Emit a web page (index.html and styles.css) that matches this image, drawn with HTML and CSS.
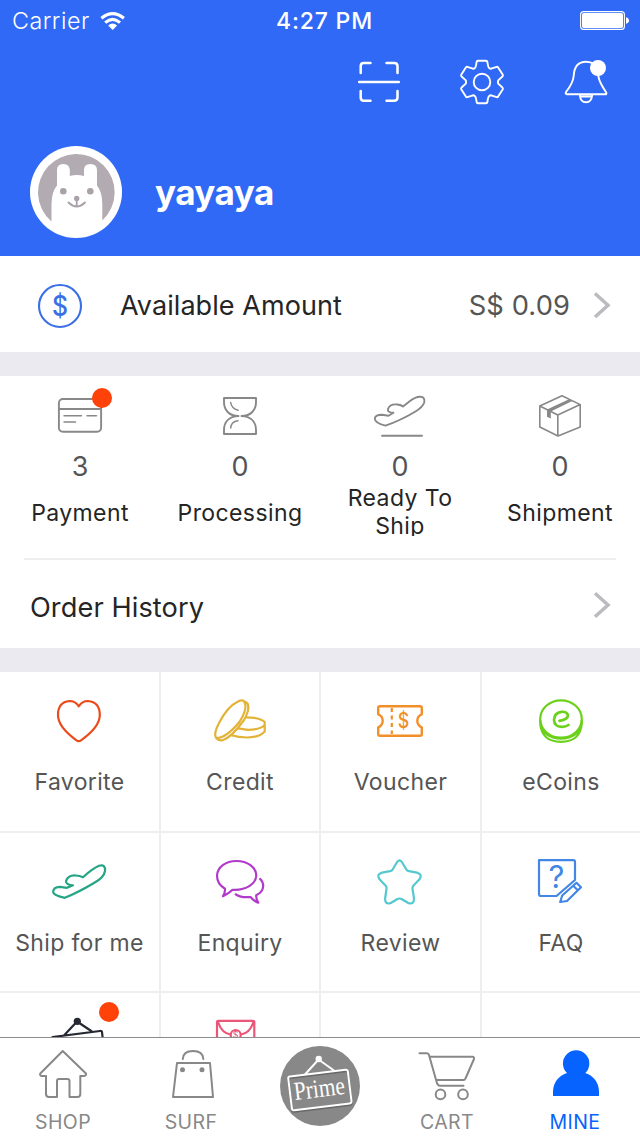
FILE: index.html
```
<!DOCTYPE html>
<html lang="en">
<head>
<meta charset="utf-8">
<title>Mine</title>
<link rel="stylesheet" href="styles.css">
</head>
<body>
<div class="screen">
  <header class="header">
    <div class="status">
      <div class="status-left">
        <span class="carrier">Carrier</span>
        <svg class="wifi" viewBox="100 10 26 20" fill="none" stroke="#fff" stroke-width="3.1"><path d="M101.4 17.3Q112.6 8 123.9 17.3M105.2 21.7Q112.6 15.2 120 21.7"/><path d="M108.2 24.4Q112.6 20.8 117.1 24.4L112.7 29Z" fill="#fff" stroke="none"/></svg>
      </div>
      <span class="time">4:27 PM</span>
      <svg class="battery" viewBox="580 10 50 21"><rect x="580.6" y="11.6" width="43.8" height="17.8" rx="3" fill="none" stroke="#fff" stroke-width="1.1"/><rect x="582" y="13" width="41" height="15" rx="1.8" fill="#fff"/><path d="M626 17.2Q629 18 629 20.5Q629 23 626 23.8Z" fill="#fff"/></svg>
    </div>
    <nav class="tools">
      <svg class="tool" viewBox="354 58 48 48"><path d="M360.7 73V66Q360.7 63 363.7 63H370.5M386.5 63H394Q397.5 63 397.5 66V73M360.7 91V97.5Q360.7 100.7 363.7 100.7H370.5M386.5 100.7H394Q397.5 100.7 397.5 97.5V91M359.2 82H398.8" stroke-width="2.5"/></svg>
      <svg class="tool" viewBox="458 58 48 48"><path transform="translate(482 82)" d="M-7-14.2Q-6-15-5.4-20Q-5.2-21.2-4-21.2H4Q5.2-21.2 5.4-20Q6-15 7-14.2Q8-13.2 9.06-13.3L14.7-15.2Q15.7-15.5 16.3-14.3L20.8-7.2Q21.2-6 20.4-5.5L16.2-1.6Q15.6 0 16.2 1.6L20.4 5.5Q21.2 6 20.8 7.2L16.3 14.3Q15.7 15.5 14.7 15.2L9.06 13.3Q8 13.2 7 14.2Q6 15 5.4 20Q5.2 21.2 4 21.2H-4Q-5.2 21.2-5.4 20Q-6 15-7 14.2Q-8 13.2-9.06 13.3L-14.7 15.2Q-15.7 15.5-16.3 14.3L-20.8 7.2Q-21.2 6-20.4 5.5L-16.2 1.6Q-15.6 0-16.2-1.6L-20.4-5.5Q-21.2-6-20.8-7.2L-16.3-14.3Q-15.7-15.5-14.7-15.2L-9.06-13.3Q-8-13.2-7-14.2Z"/><circle cx="482" cy="82" r="8.3"/></svg>
      <svg class="tool" viewBox="562 58 48 48"><path d="M567 94.3H605Q607 94.3 606.2 92.5Q599.5 82.5 598.5 77L597.8 71.5Q596 61.8 586 61.8Q574.8 61.8 573.8 75Q573.5 82.5 566 92Q565 94.3 567 94.3ZM579.8 95Q580.5 102.3 586 102.3Q591.5 102.3 592.2 95M580 96.5H592"/><circle cx="598" cy="68" r="8" fill="#fff" stroke="none"/></svg>
    </nav>
    <div class="profile">
      <svg class="avatar" viewBox="30 146 92 92"><circle cx="76" cy="192" r="46" fill="#fff"/><path d="M51.5 221.5A38.3 38.3 0 1 1 102.3 220.5V204Q102.3 192 97 185.5V170Q97 164 90.3 164Q84 164 84 170V176Q77 174 69.8 176V170Q69.5 164 63.3 164Q57 164 57 170V185.5Q51.5 192 51.5 204Z" fill="#b3abb2"/><g fill="#aaa2a9"><circle cx="63.3" cy="191.3" r="3.3"/><circle cx="90.3" cy="191.3" r="3.3"/><circle cx="76.7" cy="198.4" r="2.7"/></g><path d="M68.5 202.5Q76.7 210.5 85 202.5M76.7 198V206" fill="none" stroke="#aaa2a9" stroke-width="1.9" stroke-linecap="round"/></svg>
      <h1 class="name">yayaya</h1>
    </div>
  </header>

  <section class="amount">
    <svg class="coin" viewBox="37 283 46 46"><circle cx="60" cy="306" r="21" fill="none" stroke="#3b6fe6" stroke-width="2.1"/><text x="60" y="315.8" class="glyph-dollar" textLength="16" lengthAdjust="spacingAndGlyphs">$</text></svg>
    <span class="amount-label">Available Amount</span>
    <span class="amount-value">S$ 0.09</span>
    <svg class="chevron" viewBox="593 292 18 28"><path d="M595 293.5L608 305.3L595 317"/></svg>
  </section>

  <section class="orders">
    <div class="order">
      <svg class="order-icon" viewBox="0 376 160 72"><rect x="58.9" y="399" width="42.2" height="32.8" rx="4"/><path d="M59 409H101" stroke-width="2.2"/><path d="M64 415.7H81.5M87 415.7H96.5M64 422H75.5" stroke-width="1.4"/><circle cx="102" cy="398" r="10" fill="#fe4209" stroke="none"/></svg>
      <span class="count">3</span><span class="order-label"><span class="order-line">Payment</span></span>
    </div>
    <div class="order">
      <svg class="order-icon" viewBox="160 376 160 72"><path d="M224 398H256V402C256 410 251 416 241.5 416C251 416.5 256 422 256 430V434H224V430C224 422 229 416.5 238.5 416C229 416 224 410 224 402Z"/><path d="M230.7 402.5Q231.5 408.5 238 410.3M230.7 428Q231 421.5 238 420.7" stroke-width="1.5"/></svg>
      <span class="count">0</span><span class="order-label"><span class="order-line">Processing</span></span>
    </div>
    <div class="order">
      <svg class="order-icon" viewBox="320 376 160 72"><path d="M385.5 425.6Q374.8 423 374.8 418.5Q375 415 382 414.8L388.5 415.8L393.5 412.8Q387 412.5 388 409Q389.8 403.7 397.5 404.5Q401.5 405 403 406.5L410 401Q416.5 396 421 396.8Q425.2 397.4 424.2 402.5Q422.8 407 415.5 411.5Q400.5 420.5 385.5 425.6Z"/><path d="M382 435.8H422"/></svg>
      <span class="count">0</span><span class="order-label"><span>Ready To Ship</span></span>
    </div>
    <div class="order">
      <svg class="order-icon" viewBox="480 376 160 72"><path d="M539.8 406L562 395.8L580.2 404.6V427L558 436L539.8 427ZM539.8 406L557.8 415L580.2 404.6M557.8 415V436" stroke-width="1.6"/><path d="M547 409.5L569 399.2L572.3 400.9L550.8 411.6V418.5L547 416.8Z" fill="#888" stroke="none"/></svg>
      <span class="count">0</span><span class="order-label"><span class="order-line">Shipment</span></span>
    </div>
  </section>
  <section class="history">
    <span class="history-label">Order History</span>
    <svg class="chevron" viewBox="593 591 18 28"><path d="M595 593.3L608 605L595 616.7"/></svg>
  </section>

  <main class="grid">
    <div class="cell">
      <svg class="cell-icon" viewBox="0 672 159 88" stroke="#eb4b1a"><path d="M78.8 706.3Q75.5 701 69.5 701Q58 702 58 715Q58 727 76.5 740.3Q78.8 742 81 740.3Q99.8 727 99.8 715Q99.8 702 88 701Q82 701 78.8 706.3Z"/></svg>
      <span class="cell-label">Favorite</span>
    </div>
    <div class="cell">
      <svg class="cell-icon" viewBox="161 672 158 88" stroke="#e3b338"><path d="M216.3 738.2Q213 734.5 219 723Q227.5 706.5 238 701.5Q242 699.5 244 701.3Q248.5 708 239 722.5Q226 738 216.3 738.2ZM216.3 738.2Q219 741 222.5 740.3Q232 737 244 720Q250 709.5 247.8 704Q247.2 702.7 244 701.3"/><path d="M245.5 717.3Q260 717.3 264.7 722V731.5Q259 737.5 247 737.5Q238 737.5 231.5 735.3M264.7 725Q260 729.8 248 729.8L238 728.4"/></svg>
      <span class="cell-label">Credit</span>
    </div>
    <div class="cell">
      <svg class="cell-icon" viewBox="321 672 159 88" stroke="#f28f28"><path stroke-width="2.4" d="M380 706.2H420Q421.8 706.2 421.8 708.2V714.3Q417.3 716 417.3 720.7Q417.3 725.4 421.8 727.3V734Q421.8 735.8 420 735.8H380Q378.2 735.8 378.2 734V727.3Q382.7 725.4 382.7 720.7Q382.7 716 378.2 714.3V708.2Q378.2 706.2 380 706.2Z"/><path d="M391.8 708V734" stroke-dasharray="4 3.5"/><text x="403.5" y="728.3" class="glyph-voucher" textLength="11.5" lengthAdjust="spacingAndGlyphs">$</text></svg>
      <span class="cell-label">Voucher</span>
    </div>
    <div class="cell">
      <svg class="cell-icon" viewBox="482 672 158 88" stroke="#6cd11a"><ellipse cx="561" cy="719" rx="20.8" ry="18.7"/><path d="M540.2 720V724Q542 741.8 561 741.8Q580 741.8 581.8 724V720M540.8 725Q545 738.6 561 738.6Q577 738.6 581.2 725"/><path stroke-width="2.7" stroke-linecap="round" d="M559.5 720.8Q568 719.5 568 715Q566.5 711.3 561.5 711.8Q554 713 554 720Q554.5 727 562 726.8Q566 726.7 568.5 725"/></svg>
      <span class="cell-label">eCoins</span>
    </div>
    <div class="cell">
      <svg class="cell-icon" viewBox="0 833 159 88" stroke="#25a584"><path d="M64.8 897.8Q53 895.5 53.1 891.8Q53.5 887 60 886.8L67 887.8L73 885.3Q66 884.8 66 881.2Q68 875 75.5 875.5Q80 875.8 83 877.2Q92 869 99 865.8Q105.7 864 105 871Q104 877.5 94 883Q78 892.5 64.8 897.8Z"/></svg>
      <span class="cell-label">Ship for me</span>
    </div>
    <div class="cell">
      <svg class="cell-icon" viewBox="161 833 158 88" stroke="#b13acb"><path d="M223 896.2Q225.3 892.7 225 888.7C219.5 885.5 217 881 217 875.5C217.5 867 225.5 861 236.5 861C247.5 861 256 867 256.3 875.5C256 884 246 889.8 235 889.8H232.5Q228.5 893.8 223 896.2ZM259.5 878.3Q263.2 881.3 263.2 886Q263 892 256.2 895.2Q256 899.5 258.3 902.7Q253.8 901 250.5 897Q240 898 235 893.8"/></svg>
      <span class="cell-label">Enquiry</span>
    </div>
    <div class="cell">
      <svg class="cell-icon" viewBox="321 833 159 88" stroke="#54c8cf"><path d="M396.5 863Q399.5 857.8 402.5 863L406.2 869.2Q407 870.8 409 871.2L417 872.6Q423 874.5 419.5 879.3L413.5 885.5Q412.2 887 412.5 889L414 898.5Q414 905 408.3 903L401.5 899Q399.5 898 397.5 899L390.8 903Q385 905 385.1 898.5L386.5 889Q387 887 385.5 885.5L379.5 879.3Q376 874.5 382 872.6L390 871.2Q392 870.8 392.8 869.2Z"/></svg>
      <span class="cell-label">Review</span>
    </div>
    <div class="cell">
      <svg class="cell-icon" viewBox="482 833 158 88" stroke="#4287e5"><path d="M539 860.2H573.3Q575 860.2 575 862V880L556.5 896H541Q539 896 539 894ZM560.2 902L562.2 895.5L576.5 882.8L581 887.2L567 901ZM573.2 885.8L577.8 890.3"/><text x="556.5" y="887.8" class="glyph-question">?</text></svg>
      <span class="cell-label">FAQ</span>
    </div>
    <div class="cell">
      <svg class="cell-icon" viewBox="0 993 159 88" stroke="#262832"><path d="M63.5 1036L77 1021.5L92 1031.5M54 1050L52.5 1037L100 1031Q101.8 1030.8 102 1032L104 1050"/><circle cx="77.3" cy="1021.3" r="3.6" fill="#262832" stroke="none"/><circle cx="109" cy="1012" r="10" fill="#fe4209" stroke="none"/></svg>
    </div>
    <div class="cell">
      <svg class="cell-icon" viewBox="161 993 158 88" stroke="#ea5679"><path d="M217 1045V1022Q217 1020.8 218.2 1020.8H253Q254.3 1020.8 254.3 1022V1045M218 1022Q222 1033.5 230.5 1034.5M253.5 1022Q249.5 1033.5 241 1034.5"/><circle cx="235.7" cy="1035" r="5"/><text x="235.7" y="1038.2" class="glyph-seal">$</text></svg>
    </div>
    <div class="cell"></div>
    <div class="cell"></div>
  </main>

  <nav class="tabs">
    <div class="tab">
      <svg class="tab-icon" viewBox="0 1038 128 66"><path d="M62.7 1051L86 1073.5Q86.5 1075.7 84 1076H80.3V1094Q80.3 1097 77.5 1097H69.5V1081Q69.5 1079 67.5 1079H59Q57 1079 57 1081V1097H49Q46 1097 46 1094V1076H41.5Q39.5 1075.5 40.3 1073.5Z"/></svg>
      <span class="tab-label">SHOP</span>
    </div>
    <div class="tab">
      <svg class="tab-icon" viewBox="128 1038 128 66"><path d="M177 1063H210L213 1097H173ZM182.8 1059Q183.2 1051 193 1051Q203 1051 203.3 1059"/><g fill="#888" stroke="none"><circle cx="182.5" cy="1069.8" r="2.5"/><circle cx="202" cy="1069.8" r="2.5"/></g></svg>
      <span class="tab-label">SURF</span>
    </div>
    <div class="tab prime">
      <svg class="prime-icon" viewBox="280 1046 80 80"><circle cx="320" cy="1086" r="40" fill="#888"/><g fill="none" stroke="#686868" stroke-width="2"><rect x="290" y="1074.5" width="60" height="34" rx="2" transform="rotate(-7 320 1091)"/></g><g fill="none" stroke="#fff" stroke-width="2"><path d="M305 1074.5L318.5 1059.5L334 1070.5"/><rect x="290" y="1073" width="60" height="34" rx="2" transform="rotate(-7 320 1091)"/></g><circle cx="318.7" cy="1059" r="3.2" fill="#fff"/><text class="prime-text" x="319.5" y="1097" transform="rotate(-7 320 1091)" textLength="51" lengthAdjust="spacingAndGlyphs">Prime</text></svg>
    </div>
    <div class="tab">
      <svg class="tab-icon" viewBox="384 1038 128 66"><path d="M419.5 1053.2H427Q428.5 1053.2 429 1055L436.5 1081.5Q437.5 1085.7 440 1085.7H463.5M430 1056.8H472.5Q474.5 1057 474 1059L465.5 1078.5Q465 1080 463.5 1080H437"/><circle cx="440.5" cy="1094.4" r="4.8"/><circle cx="463" cy="1094.4" r="4.8"/></svg>
      <span class="tab-label">CART</span>
    </div>
    <div class="tab tab-active">
      <svg class="tab-icon" viewBox="512 1038 128 66"><path d="M553 1096V1091Q554 1077.5 567 1073A13.2 13.2 0 1 1 585.3 1073Q598 1077.5 599 1091V1096Z" fill="#0763ff" stroke="none"/></svg>
      <span class="tab-label">MINE</span>
    </div>
  </nav>
</div>
</body>
</html>
```
FILE: styles.css
```
* { box-sizing: border-box; }
body { margin: 0; background: #fff; font-family: Inter, "Liberation Sans", sans-serif; }
svg { display: block; }
.screen { display: flex; flex-direction: column; width: 640px; height: 1136px; overflow: hidden; background: #fff; }

.header { flex: none; height: 256px; background: #3069f5; color: #fff; }
.status { display: grid; grid-template-columns: 220px 1fr 220px; align-items: center; height: 40px; padding: 0 11px 0 12px; }
.status-left { display: flex; align-items: center; gap: 10px; }
.carrier { width: 78px; padding-top: 1px; font-size: 23.3px; font-weight: 350; line-height: 40px; letter-spacing: 0.5px; white-space: nowrap; }
.wifi { width: 26px; height: 20px; }
.time { justify-self: center; padding: 1px 0 0 8px; font-size: 23px; font-weight: 550; line-height: 40px; letter-spacing: 0.8px; white-space: nowrap; }
.battery { justify-self: end; width: 50px; height: 21px; margin-right: -1px; }
.tools { display: flex; justify-content: space-between; height: 106px; padding: 18px 30px 0 354px; }
.tool { width: 48px; height: 48px; fill: none; stroke: #fff; stroke-width: 1.9; stroke-linecap: round; stroke-linejoin: round; }
.profile { display: flex; align-items: center; gap: 33px; height: 92px; padding-left: 30px; }
.avatar { width: 92px; height: 92px; }
.name { margin: 0; font-size: 35px; font-weight: 700; line-height: 44px; letter-spacing: -0.55px; }

.amount { display: flex; flex: none; align-items: center; height: 96px; padding: 4px 29px 0 37px; }
.coin { width: 46px; height: 46px; }
.glyph-dollar { fill: #3b6fe6; font-size: 28px; font-weight: 500; text-anchor: middle; }
.amount-label { margin-left: 37px; font-size: 27px; line-height: 36px; letter-spacing: 0.06px; color: #252525; }
.amount-value { margin-left: auto; font-size: 27.3px; line-height: 36px; letter-spacing: 0.1px; color: #555; }
.chevron { width: 18px; height: 28px; margin-left: 23px; fill: none; stroke: #bbbbbf; stroke-width: 3.5; }

.orders { display: grid; flex: none; grid-template-columns: repeat(4, 160px); height: 206px; border-top: 24px solid #ebeaf0; }
.order { display: flex; flex-direction: column; align-items: center; }
.order-icon { width: 160px; height: 72px; fill: none; stroke: #888; stroke-width: 1.9; stroke-linecap: round; stroke-linejoin: round; }
.count { height: 40px; font-size: 27px; line-height: 37px; color: #555; }
.order-label { display: flex; align-items: center; justify-content: center; width: 130px; height: 48px; overflow: hidden; font-size: 23px; line-height: 28px; letter-spacing: 0.4px; text-align: center; color: #252525; }
.order-line { padding-top: 2px; }
.history { display: flex; flex: none; align-items: center; height: 90px; margin-left: 24px; margin-right: 24px; padding: 2px 5px 0 6px; border-top: 2px solid #eee; }
.history-label { margin-right: auto; padding-top: 6px; font-size: 27.2px; line-height: 36px; letter-spacing: 0.08px; color: #252525; }

.grid { display: grid; flex: none; grid-template-columns: 161px 160px 161px 158px; grid-template-rows: 161px 160px 160px; height: 389px; overflow: hidden; border-top: 24px solid #ebeaf0; }
.cell { display: flex; flex-direction: column; align-items: center; border-right: 2px solid #eee; border-bottom: 2px solid #eee; }
.cell:nth-child(4n) { border-right: 0; }
.cell-icon { width: 100%; height: 88px; flex: none; fill: none; stroke-width: 2.2; stroke-linejoin: round; }
.cell-label { padding-top: 7px; font-size: 23px; line-height: 30px; letter-spacing: 0.35px; white-space: nowrap; color: #555; }
.glyph-voucher { fill: #f28f28; stroke: none; font-size: 21px; font-weight: 500; text-anchor: middle; }
.glyph-question { fill: #4287e5; stroke: none; font-size: 31px; font-weight: 400; text-anchor: middle; }
.glyph-seal { fill: #ea5679; stroke: none; font-size: 9px; text-anchor: middle; }

.tabs { display: grid; flex: none; grid-template-columns: repeat(5, 128px); height: 99px; border-top: 1px solid #8c8c8c; background: #fff; }
.tab { display: flex; flex-direction: column; align-items: center; color: #888; }
.tab-icon { width: 128px; height: 66px; fill: none; stroke: #888; stroke-width: 2; stroke-linecap: round; stroke-linejoin: round; }
.tab-label { padding: 6px 2px 0 0; font-size: 19.5px; line-height: 24px; letter-spacing: 0.4px; }
.tab-active { color: #0763ff; }
.prime { padding-top: 8px; }
.prime-icon { width: 80px; height: 80px; }
.prime-text { fill: #fff; font-family: "Liberation Serif", serif; font-size: 26px; text-anchor: middle; }
```
